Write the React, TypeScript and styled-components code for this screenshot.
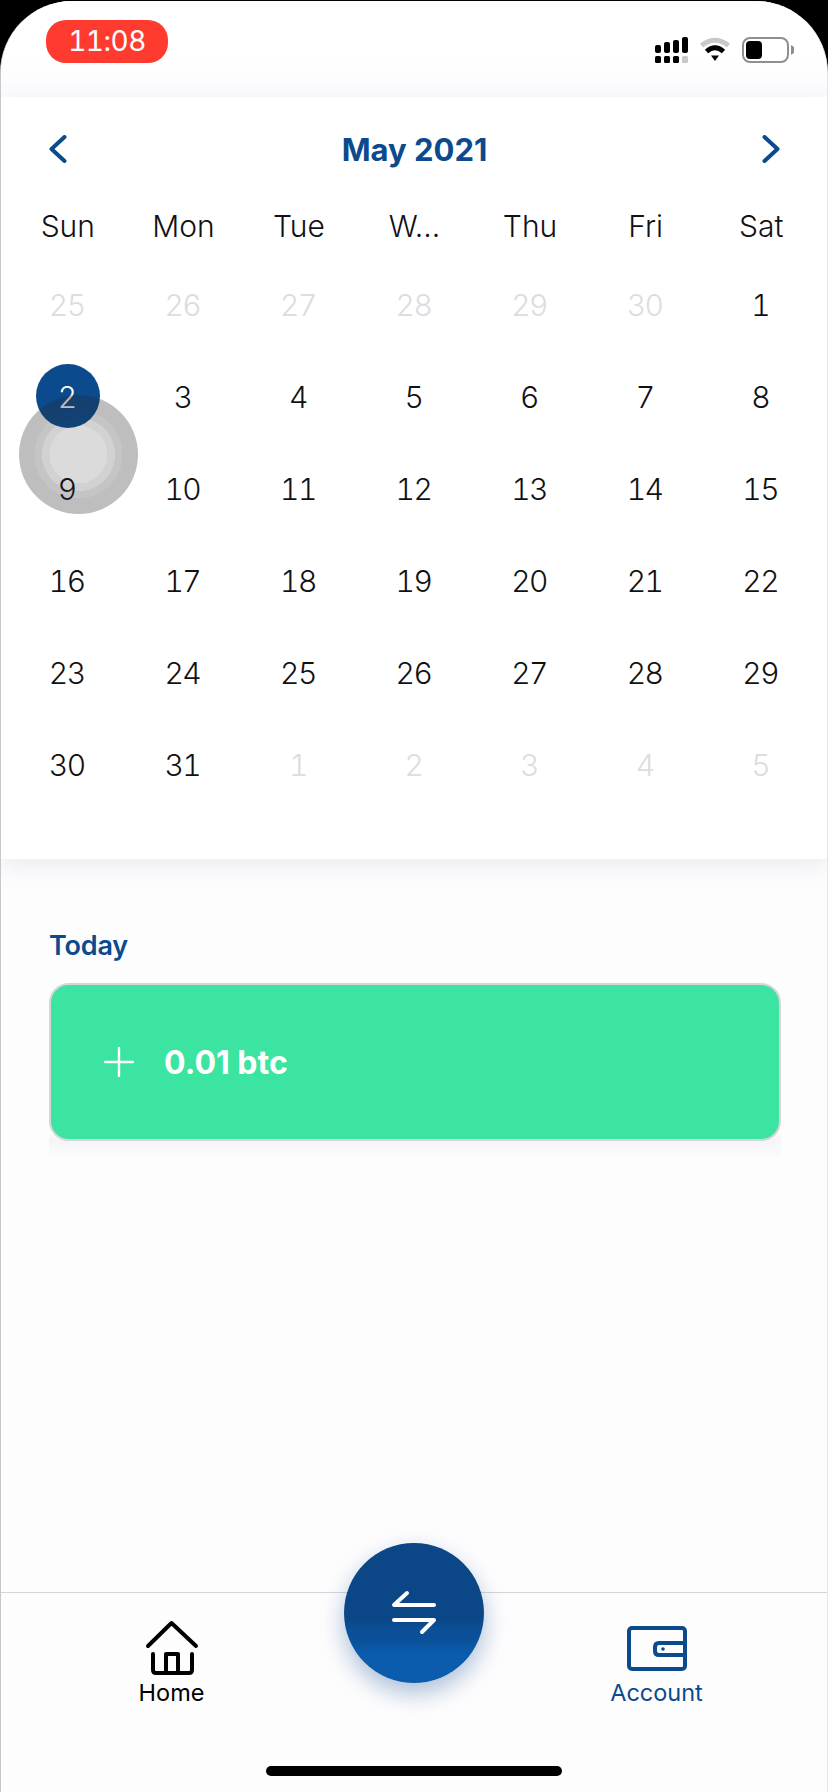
import styled, { createGlobalStyle } from "styled-components"

const NAVY = "#0b4a8c"

const GlobalStyle = createGlobalStyle`
  html, body {
    margin: 0;
    padding: 0;
    background: #000;
  }
  * {
    box-sizing: border-box;
  }
`
const Screen = styled.div`
  width: 828px;
  height: 1792px;
  background: #000;
  padding-top: 1px;
  overflow: hidden;
  font-family: Inter, "Liberation Sans", sans-serif;
`
const Page = styled.div`
  height: 1791px;
  display: flex;
  flex-direction: column;
  background: #fefdfe;
  border-radius: 72px 72px 0 0;
  border-left: 1px solid #c8c8cc;
  border-right: 1px solid #e4e4e8;
  overflow: hidden;
`
const StatusBar = styled.div`
  height: 96px;
  flex: none;
  display: flex;
  justify-content: space-between;
  padding: 19px 33px 0 45px;
  background: linear-gradient(#ffffff 60%, #fbfafd 100%);
`
const TimePill = styled.div`
  width: 122px;
  height: 43px;
  border-radius: 20px;
  background: #ff3b30;
  color: #fff;
  font-size: 28px;
  font-variant-numeric: tabular-nums;
  letter-spacing: -0.5px;
  line-height: 43px;
  text-align: center;
`
const StatusIcons = styled.div`
  display: flex;
  gap: 11px;
  align-items: flex-start;
  margin-top: 17px;
`
const Calendar = styled.section`
  position: relative;
  height: 762px;
  flex: none;
  background: #fff;
  padding: 0 8px 0 9px;
  box-shadow: 0 8px 22px rgba(120, 120, 140, 0.14);
`
const CalendarHead = styled.div`
  height: 104px;
  display: flex;
  align-items: center;
  justify-content: space-between;
  padding: 0 39px;
`
const MonthTitle = styled.h2`
  margin: 0;
  font-size: 31px;
  font-weight: 700;
  color: ${NAVY};
`
const WeekRow = styled.div`
  display: grid;
  grid-template-columns: repeat(7, 1fr);
  height: 48px;
  padding-top: 2px;
  margin-bottom: 9px;
  align-items: center;
  text-align: center;
  font-size: 30px;
  font-weight: 300;
  color: #111113;
`
const DayGrid = styled.div`
  display: grid;
  grid-template-columns: repeat(7, 1fr);
  grid-auto-rows: 92px;
`
const Day = styled.div<{ $muted?: boolean; $selected?: boolean }>`
  display: flex;
  align-items: center;
  justify-content: center;
  font-size: 30px;
  font-weight: 300;
  font-variant-numeric: tabular-nums;
  letter-spacing: -1.5px;
  color: ${(p) => (p.$selected ? "#fff" : p.$muted ? "#dcdce1" : "#111113")};
  span {
    width: 64px;
    height: 64px;
    padding: 1px 2px 0 0;
    border-radius: 50%;
    display: flex;
    align-items: center;
    justify-content: center;
    background: ${(p) => (p.$selected ? NAVY : "transparent")};
  }
`
/* tap ripple from the screen recording, sits on top of the dates */
const Ripple = styled.div`
  position: absolute;
  left: 18px;
  top: 298px;
  width: 119px;
  height: 119px;
  border-radius: 50%;
  background: radial-gradient(
    circle,
    rgba(40, 40, 45, 0.17) 0 29px,
    rgba(40, 40, 45, 0.21) 29px 36.5px,
    rgba(40, 40, 45, 0.27) 36.5px 44px,
    rgba(40, 40, 45, 0.3) 44px
  );
`
const TodaySection = styled.section`
  padding: 72px 46px 0 48px;
`
const TodayLabel = styled.h3`
  margin: 0 0 22px;
  font-size: 27px;
  line-height: 30px;
  font-weight: 600;
  letter-spacing: -0.2px;
  color: ${NAVY};
`
const EntryWrap = styled.div`
  padding-bottom: 16px;
  background: linear-gradient(transparent 85%, #f5f4f7 90%, #fbfafd 100%);
`
const EntryCard = styled.div`
  height: 158px;
  display: flex;
  align-items: center;
  gap: 30px;
  padding-left: 53px;
  border: 2px solid #d6d6d6;
  border-radius: 20px;
  background: #3be5a1;
  color: #fff;
  font-size: 32px;
  font-weight: 700;
`
const TabBar = styled.nav`
  margin-top: auto;
  height: 200px;
  flex: none;
  display: flex;
  flex-direction: column;
  border-top: 1px solid #d5d5da;
`
const TabRow = styled.div`
  display: flex;
  padding-top: 27px;
`
const TabItem = styled.div<{ $active?: boolean }>`
  width: 341px;
  display: flex;
  flex-direction: column;
  align-items: center;
  color: ${(p) => (p.$active ? NAVY : "#000")};
  font-size: 23.5px;
  line-height: 30px;
  svg {
    display: block;
    margin-bottom: 2px;
  }
`
const FabSlot = styled.div`
  width: 144px;
  display: flex;
  justify-content: center;
`
const Fab = styled.button`
  width: 140px;
  height: 140px;
  margin-top: -77px;
  padding: 0;
  border: none;
  border-radius: 50%;
  display: flex;
  align-items: center;
  justify-content: center;
  background: linear-gradient(#0b4786 0, #0b4786 55%, #0b4f98 62%, #0b4f98 68%, #0c5cae 79%, #0c5cae 100%);
  box-shadow: 0 10px 24px rgba(11, 74, 140, 0.35);
`
const HomeBar = styled.div`
  width: 296px;
  height: 10px;
  margin: auto 0 16px 265px;
  border-radius: 5px;
  background: #000;
`

const leading = [25, 26, 27, 28, 29, 30]
const trailing = [1, 2, 3, 4, 5]
const current = Array.from({ length: 31 }, (_, i) => i + 1)

function SignalIcon() {
  const xs = [0, 9, 18, 27]
  const tops = [8, 5, 3, 0]
  return (
    <svg width="33" height="26" viewBox="0 0 33 26">
      {xs.map((x, i) => (
        <rect key={x} x={x} y={tops[i]} width="6" height={16 - tops[i]} rx="2" fill="#000" />
      ))}
      {xs.map((x, i) => (
        <rect key={x} x={x} y="19" width="6" height="7" rx="1.5" fill={i === 3 ? "#c8c8c8" : "#000"} />
      ))}
    </svg>
  )
}

function WifiIcon() {
  return (
    <svg width="32" height="24" viewBox="0 0 32 24" fill="none">
      <path d="M2.5 8.5Q16 -2 29.5 8.5" stroke="#c9c9c9" strokeWidth="5" />
      <path d="M7.5 14.5Q16 7 24.5 14.5" stroke="#000" strokeWidth="5" />
      <path d="M12 18.5h8L16 24z" fill="#000" />
    </svg>
  )
}

function BatteryIcon() {
  return (
    <svg width="52" height="26" viewBox="0 0 52 26">
      <rect x="1" y="1" width="45" height="24" rx="7" fill="none" stroke="#8f8f8f" strokeWidth="2" />
      <rect x="4" y="4" width="16" height="18" rx="4" fill="#000" />
      <path d="M49 8l3 2v6l-3 2z" fill="#8f8f8f" />
    </svg>
  )
}

function Chevron({ flip }: { flip?: boolean }) {
  return (
    <svg width="18" height="28" viewBox="0 0 18 28" fill="none">
      <path
        d={flip ? "M2.5 2L15.5 14L2.5 26" : "M15.5 2L2.5 14L15.5 26"}
        stroke={NAVY}
        strokeWidth="4"
        strokeLinecap="round"
        strokeLinejoin="round"
      />
    </svg>
  )
}

function HomeIcon() {
  return (
    <svg width="54" height="56" viewBox="0 0 54 56" fill="none" stroke="#000" strokeWidth="4" strokeLinecap="round" strokeLinejoin="round">
      <path d="M3 26L26.5 3L51 26" />
      <path d="M8 34V50Q8 53 11 53H44Q47 53 47 50V34" />
      <path d="M21 52V34H33V52" />
    </svg>
  )
}

function WalletIcon() {
  return (
    <svg width="60" height="56" viewBox="0 0 60 56" fill="none" stroke={NAVY} strokeWidth="4" strokeLinejoin="round">
      <rect x="2" y="8" width="56" height="41" rx="3" />
      <path d="M58 23H32Q28 23 28 27V31Q28 35 32 35H58" />
      <circle cx="36" cy="29" r="1.8" fill={NAVY} stroke="none" />
    </svg>
  )
}

function SwapIcon() {
  return (
    <svg width="46" height="46" viewBox="0 0 46 46" fill="none" stroke="#fff" strokeWidth="4" strokeLinecap="round" strokeLinejoin="round">
      <path d="M16 3L3 15H43" />
      <path d="M3 30H43L31 42" />
    </svg>
  )
}

export default function App() {
  return (
    <Screen>
      <GlobalStyle />
      <Page>
        <StatusBar>
          <TimePill>11:08</TimePill>
          <StatusIcons>
            <SignalIcon />
            <WifiIcon />
            <BatteryIcon />
          </StatusIcons>
        </StatusBar>

        <Calendar>
          <CalendarHead>
            <Chevron />
            <MonthTitle>May 2021</MonthTitle>
            <Chevron flip />
          </CalendarHead>
          <WeekRow>
            {["Sun", "Mon", "Tue", "W...", "Thu", "Fri", "Sat"].map((d) => (
              <div key={d}>{d}</div>
            ))}
          </WeekRow>
          <DayGrid>
            {leading.map((d) => (
              <Day key={`prev-${d}`} $muted>
                <span>{d}</span>
              </Day>
            ))}
            {current.map((d) => (
              <Day key={d} $selected={d === 2}>
                <span>{d}</span>
              </Day>
            ))}
            {trailing.map((d) => (
              <Day key={`next-${d}`} $muted>
                <span>{d}</span>
              </Day>
            ))}
          </DayGrid>
          <Ripple />
        </Calendar>

        <TodaySection>
          <TodayLabel>Today</TodayLabel>
          <EntryWrap>
            <EntryCard>
              <svg width="30" height="30" viewBox="0 0 30 30" stroke="#fff" strokeWidth="2.4" strokeLinecap="round">
                <path d="M15 1V29M1 15H29" />
              </svg>
              0.01 btc
            </EntryCard>
          </EntryWrap>
        </TodaySection>

        <TabBar>
          <TabRow>
            <TabItem>
              <HomeIcon />
              Home
            </TabItem>
            <FabSlot>
              <Fab>
                <SwapIcon />
              </Fab>
            </FabSlot>
            <TabItem $active>
              <WalletIcon />
              Account
            </TabItem>
          </TabRow>
          <HomeBar />
        </TabBar>
      </Page>
    </Screen>
  )
}
